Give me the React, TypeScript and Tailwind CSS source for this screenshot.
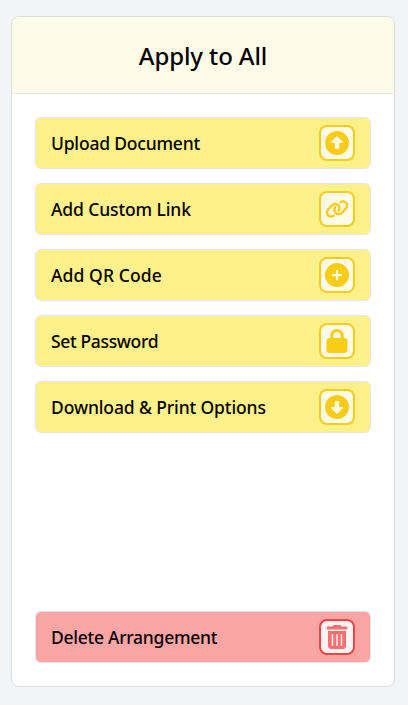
import { FaCircleUp, FaLink, FaCirclePlus, FaLock, FaCircleDown, FaTrashCan } from 'react-icons/fa6';

export default function App() {
  const actions = [
    { label: 'Upload Document', icon: FaCircleUp, tracking: 'tracking-[-0.2px]' },
    { label: 'Add Custom Link', icon: FaLink, tracking: 'tracking-[-0.12px]' },
    { label: 'Add QR Code', icon: FaCirclePlus, tracking: 'tracking-[0.1px]' },
    { label: 'Set Password', icon: FaLock, tracking: 'tracking-[-0.35px]' },
    { label: 'Download & Print Options', icon: FaCircleDown, tracking: 'tracking-[-0.12px]' },
  ];

  return (
    <div className="h-[705px] bg-[#f3f4f6] pt-4 pl-[11px] font-['Noto_Sans','Open_Sans',sans-serif] text-black">
      <div className="flex h-[671px] w-96 flex-col overflow-hidden rounded-lg border border-[#d9dce1] bg-white">
        {/* Header */}
        <div className="flex h-[77px] shrink-0 items-center justify-center border-b border-[#e5e7eb] bg-[#fefce8] pt-0.5">
          <h1 className="text-2xl font-medium tracking-[-0.1px]">Apply to All</h1>
        </div>

        {/* Actions */}
        <div className="flex flex-1 flex-col justify-between p-[23px]">
          <div className="flex flex-col gap-3.5">
            {actions.map(({ label, icon: Icon, tracking }) => (
              <button
                key={label}
                className="flex h-[52px] items-center justify-between rounded-md border border-[#e5e7eb] bg-[#fef08a] px-[15px]"
              >
                <span className={`pt-px text-[17.5px] font-medium ${tracking}`}>{label}</span>
                <span className="flex size-9 items-center justify-center rounded-lg border-2 border-[#facc15] bg-[#fefce8]">
                  <Icon className="size-6 text-[#facc15]" />
                </span>
              </button>
            ))}
          </div>

          <button className="flex h-[52px] items-center justify-between rounded-md border border-[#e5e7eb] bg-[#fca5a5] px-[15px]">
            <span className="pt-px text-[17.5px] font-medium tracking-[-0.27px]">Delete Arrangement</span>
            <span className="flex size-9 items-center justify-center rounded-lg border-2 border-[#ef4444] bg-[#fef2f2]">
              <FaTrashCan className="size-6 text-[#f87171]" />
            </span>
          </button>
        </div>
      </div>
    </div>
  );
}
